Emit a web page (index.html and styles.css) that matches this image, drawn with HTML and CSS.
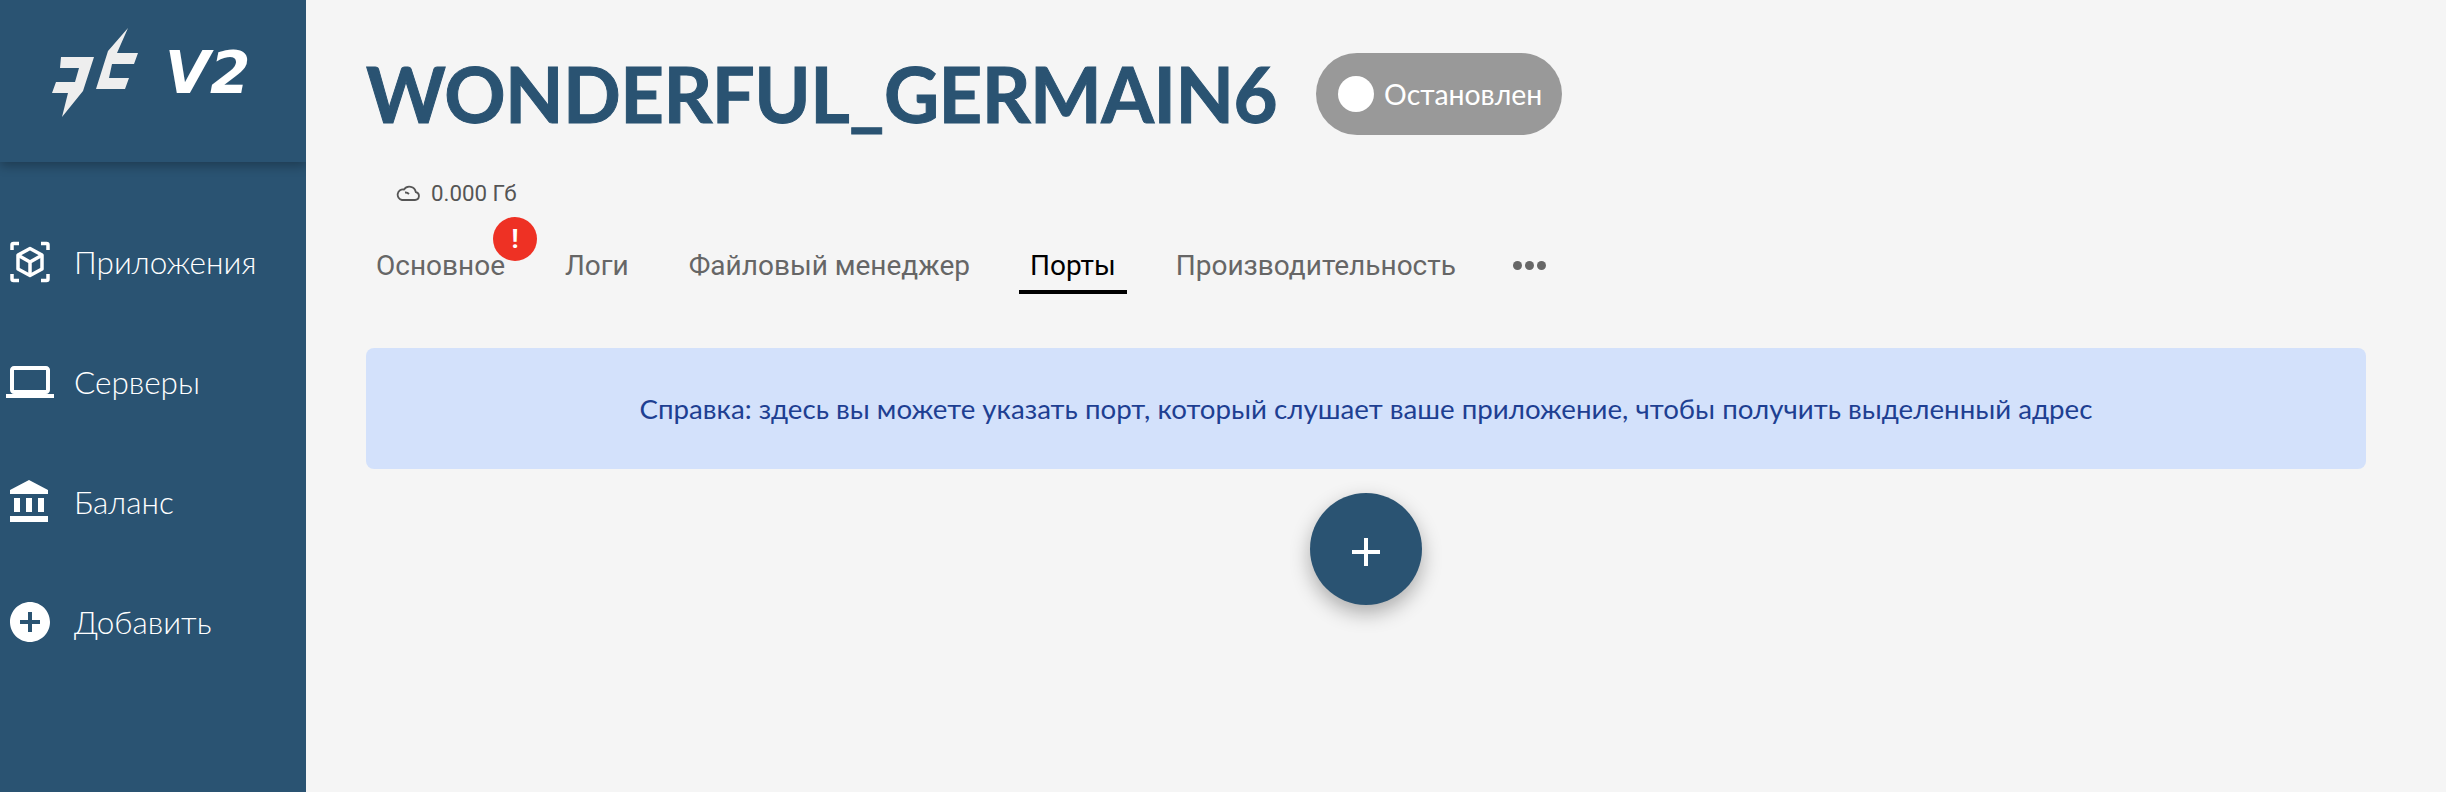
FILE: index.html
```html
<!DOCTYPE html>
<html lang="ru">
<head>
<meta charset="utf-8">
<title>WONDERFUL_GERMAIN6</title>
<link rel="stylesheet" href="styles.css">
</head>
<body>
<div class="app">
  <aside class="sidebar">
    <div class="brand">
      <svg class="logo" viewBox="0 0 100 100" width="100" height="100" aria-hidden="true">
        <path d="M11 39H44L33 73 12 99 18 75H2L6 64H25L29 50H10Z"/>
        <path d="M78 10 67 35H88L84 46H62L59 60H79L75 71H46L58 33Z"/>
      </svg>
      <span class="version">V2</span>
    </div>
    <nav class="nav">
      <a class="nav-item">
        <svg class="nav-icon" viewBox="0 0 48 48" aria-hidden="true">
          <g class="stroke-icon">
            <path d="M6 12V7a1.500 1.500 0 0 1 1.500-1.500H13M35 5.500h5.500A1.500 1.500 0 0 1 42 7v5M42 36v5a1.500 1.500 0 0 1-1.500 1.500H35M13 42.500H7.500A1.500 1.500 0 0 1 6 41v-5"/>
            <path d="M24 10.500 36 17v14l-12 6.500L12 31V17Z"/>
            <path d="M12.500 17.500 24 24l11.500-6.500M24 24v13"/>
          </g>
        </svg>
        <span>Приложения</span>
      </a>
      <a class="nav-item">
        <svg class="nav-icon" viewBox="0 0 24 24" aria-hidden="true"><path d="M20 18c1.100 0 1.990-.9 1.990-2L22 6c0-1.100-.9-2-2-2H4c-1.100 0-2 .9-2 2v10c0 1.100.9 2 2 2H0v2h24v-2h-4zM4 6h16v10H4V6z"/></svg>
        <span>Серверы</span>
      </a>
      <a class="nav-item">
        <svg class="nav-icon" viewBox="0 0 24 24" aria-hidden="true"><path d="M4 10v7h3v-7H4zm6 0v7h3v-7h-3zM2 22h19v-3H2v3zm14-12v7h3v-7h-3zm-4.500-9L2 6v2h19V6l-9.500-5z"/></svg>
        <span>Баланс</span>
      </a>
      <a class="nav-item">
        <svg class="nav-icon" viewBox="0 0 24 24" aria-hidden="true"><path d="M12 2C6.480 2 2 6.480 2 12s4.480 10 10 10 10-4.480 10-10S17.520 2 12 2zm5 11h-4v4h-2v-4H7v-2h4V7h2v4h4v2z"/></svg>
        <span>Добавить</span>
      </a>
    </nav>
  </aside>
  <main class="main">
    <header class="title-row">
      <h1 class="title">WONDERFUL_GERMAIN6</h1>
      <div class="status"><span class="status-dot"></span><span>Остановлен</span></div>
    </header>
    <div class="stats">
      <svg class="cloud" viewBox="0 0 24 16" aria-hidden="true"><path d="M6 15H19a4 4 0 0 0 .8-7.900A6.500 6.500 0 0 0 8 4.500 5.300 5.300 0 0 0 6 15ZM9 7.500A5 5 0 0 1 13 9"/></svg>
      <span>0.000 Гб</span>
    </div>
    <div class="tabs">
      <div class="tab">Основное<span class="badge">!</span></div>
      <div class="tab">Логи</div>
      <div class="tab">Файловый менеджер</div>
      <div class="tab active">Порты</div>
      <div class="tab">Производительность</div>
      <div class="more"><i></i><i></i><i></i></div>
    </div>
    <div class="alert">Справка: здесь вы можете указать порт, который слушает ваше приложение, чтобы получить выделенный адрес</div>
    <button class="fab" type="button" aria-label="Добавить"><svg viewBox="0 0 28 28" width="28" height="28" aria-hidden="true"><path d="M12 0h4v12H28v4H16V28h-4V16H0v-4h12Z"/></svg></button>
  </main>
</div>
</body>
</html>
```
FILE: styles.css
```css
* { box-sizing: border-box; }
html, body { margin: 0; height: 100%; }
body { background: #f5f5f5; font-family: "Lato", "Open Sans", sans-serif; overflow: hidden; }
.app { display: flex; height: 792px; }

.sidebar { width: 306px; flex: none; background: #2a5372; color: #fff; overflow: hidden; }
.brand {
  height: 162px; display: flex; align-items: flex-start; position: relative;
  padding: 18px 0 0 50px; gap: 15px;
  box-shadow: 0 4px 10px rgba(0,0,0,.28);
}
.logo { fill: #eeeeee; flex: none; }
.version { font: italic bold 58px/1 "DejaVu Sans", sans-serif; margin-top: 26px; }
.nav { display: flex; flex-direction: column; gap: 72px; padding: 76px 0 0 6px; }
.nav-item { display: flex; align-items: center; height: 48px; gap: 20px; font-size: 31.500px; font-weight: 300; }
.nav-icon { width: 48px; height: 48px; fill: #fff; flex: none; }
.stroke-icon { fill: none; stroke: #fff; stroke-width: 3.500; stroke-linejoin: round; }

.main { flex: 1; padding: 53px 80px 0 60px; display: flex; flex-direction: column; align-items: stretch; }
.title-row { display: flex; align-items: center; height: 82px; gap: 39px; }
.title { margin: 0; font-size: 76px; font-weight: 700; letter-spacing: -.55px; -webkit-text-stroke: 1px #2a5372; color: #2a5372; line-height: 1; white-space: nowrap; }
.status {
  display: flex; align-items: center; gap: 10px; height: 82px; padding: 0 20px 0 22px;
  background: #999; color: #fff; border-radius: 41px; font-size: 28.400px; white-space: nowrap;
}
.status-dot { width: 36px; height: 36px; border-radius: 50%; background: #fff; }

.stats { display: flex; align-items: center; gap: 11px; margin-top: 45px; padding-left: 30px; height: 26px; color: #555; font: 22.300px/26px Roboto, sans-serif; }
.cloud { width: 24px; height: 16px; fill: none; stroke: #555; stroke-width: 1.800; }

.tabs { display: flex; align-items: center; margin: 24px 0 0 -1px; gap: 38px; height: 64px; font: 28px/1 Roboto, sans-serif; color: #666; }
.tab { position: relative; height: 64px; padding: 8px 11px 0; display: flex; align-items: center; white-space: nowrap; }
.tab.active { color: #000; border-bottom: 4px solid #000; padding-top: 12px; }
.badge {
  position: absolute; left: 128px; top: -13px; width: 44px; height: 44px; border-radius: 50%;
  background: #ee3124; color: #fff; font: bold 26px/44px Roboto, sans-serif; text-align: center;
}
.more { display: flex; gap: 3px; margin-left: 8px; padding-top: 6px; }
.more i { width: 9px; height: 9px; border-radius: 50%; background: #666; }

.alert {
  height: 121px; margin-top: 54px; display: flex; align-items: center; justify-content: center;
  background: #d3e1fb; color: #1e3f92; border-radius: 8px; font-size: 27.700px;
}
.fab {
  align-self: center; width: 112px; height: 112px; margin-top: 24px; border: 0; padding: 0; border-radius: 50%;
  background: #2a5372; box-shadow: 0 8px 20px rgba(0,0,0,.3); display: flex; align-items: center; justify-content: center;
}
.fab svg { fill: #fff; margin-top: 6px; }
```
